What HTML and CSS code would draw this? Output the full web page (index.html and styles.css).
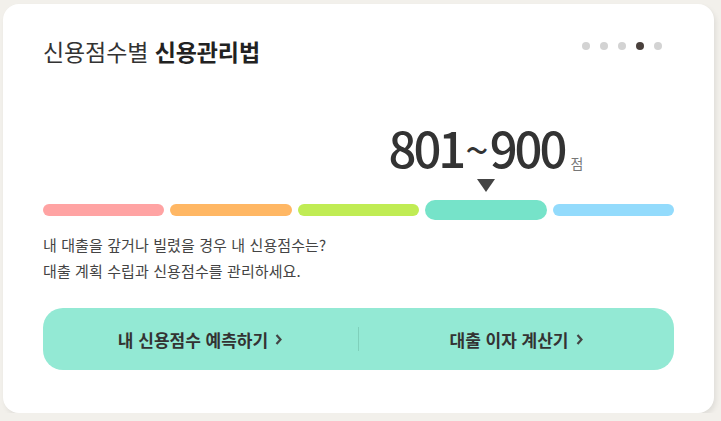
FILE: index.html
```html
<!DOCTYPE html>
<html lang="ko">
<head>
<meta charset="utf-8">
<link rel="stylesheet" href="styles.css">
</head>
<body>
<div class="card">
  <div class="header">
    <h2 class="title">신용점수별 <strong>신용관리법</strong></h2>
    <div class="dots">
      <span class="dot"></span><span class="dot"></span><span class="dot"></span><span class="dot on"></span><span class="dot"></span>
    </div>
  </div>
  <div class="scale">
    <div class="label"><span class="range">801<span class="tilde">~</span>900</span><span class="unit">점</span></div>
    <div class="pointer"><svg width="18" height="13" viewBox="0 0 18 13"><path d="M0 0 H18 L9 13 Z" fill="#444"/></svg></div>
    <span class="bar b1"></span>
    <span class="bar b2"></span>
    <span class="bar b3"></span>
    <span class="bar b4"></span>
    <span class="bar b5"></span>
  </div>
  <p class="desc">내 대출을 갚거나 빌렸을 경우 내 신용점수는?<br>대출 계획 수립과 신용점수를 관리하세요.</p>
  <div class="actions">
    <a class="action">내 신용점수 예측하기 <svg class="chev" width="9" height="13" viewBox="0 0 9 13"><path d="M2.5 2 L6.5 6.5 L2.5 11" fill="none" stroke="#444" stroke-width="2.2"/></svg></a>
    <span class="sep"></span>
    <a class="action">대출 이자 계산기 <svg class="chev" width="9" height="13" viewBox="0 0 9 13"><path d="M2.5 2 L6.5 6.5 L2.5 11" fill="none" stroke="#444" stroke-width="2.2"/></svg></a>
  </div>
</div>
</body>
</html>
```

FILE: styles.css
```css
html, body {
  margin: 0;
  padding: 0;
  background: #f2f0eb;
}
body {
  padding: 4px 0 0 3px;
  font-family: "Noto Sans CJK KR", "Noto Sans", sans-serif;
  color: #333;
}
.card {
  width: 711px;
  height: 409px;
  box-sizing: border-box;
  background: #fff;
  border-radius: 16px;
  box-shadow: 2px 3px 5px rgba(0, 0, 0, 0.08);
  padding: 34px 40px 0 40px;
}
.header {
  display: flex;
  justify-content: space-between;
  align-items: flex-start;
}
.title {
  margin: 0;
  font-size: 23px;
  line-height: 26px;
  font-weight: 400;
  color: #333;
  letter-spacing: -0.1px;
}
.title strong {
  font-weight: 700;
  color: #222;
}
.dots {
  display: flex;
  gap: 10px;
  padding: 4px 12px 0 0;
}
.dot {
  width: 8px;
  height: 8px;
  border-radius: 50%;
  background: #d3d3d3;
}
.dot.on {
  background: #4a403c;
}
.scale {
  margin-top: 58px;
  display: grid;
  grid-template-columns: repeat(5, minmax(0, 1fr));
  column-gap: 6px;
  align-items: center;
}
.label {
  grid-column: 4;
  grid-row: 1;
  display: flex;
  justify-content: center;
  align-items: baseline;
  white-space: nowrap;
  height: 52px;
}
.range {
  font-size: 49px;
  line-height: 52px;
  font-weight: 500;
  letter-spacing: -3px;
  color: #333;
  position: relative;
  top: -1px;
}
.tilde {
  display: inline-block;
  font-size: 42px;
  font-weight: 400;
  margin: 0 4px 0 2px;
  position: relative;
  top: -2px;
}
.unit {
  font-size: 14px;
  color: #777;
  margin-left: 6px;
}
.pointer {
  grid-column: 4;
  grid-row: 2;
  display: flex;
  justify-content: center;
  height: 13px;
  margin: 5px 0 8px;
}
.pointer svg {
  display: block;
}
.bar {
  grid-row: 3;
  height: 12px;
  border-radius: 6px;
}
.b1 { background: #ffa3a3; }
.b2 { background: #ffb764; }
.b3 { background: #c0ec54; }
.b4 { background: #76e3c9; height: 20px; border-radius: 10px; }
.b5 { background: #93dbfc; }
.desc {
  margin: 12px 0 0;
  font-size: 15px;
  line-height: 26px;
  color: #444;
  letter-spacing: 0.1px;
}
.actions {
  margin-top: 24px;
  height: 62px;
  background: #93e9d4;
  border-radius: 20px;
  display: flex;
  align-items: center;
}
.action {
  flex: 1;
  display: flex;
  justify-content: center;
  align-items: center;
  gap: 6px;
  font-size: 17px;
  font-weight: 700;
  color: #333;
}
.chev {
  display: block;
}
.sep {
  width: 1px;
  height: 24px;
  background: #7fd0bb;
}
```
